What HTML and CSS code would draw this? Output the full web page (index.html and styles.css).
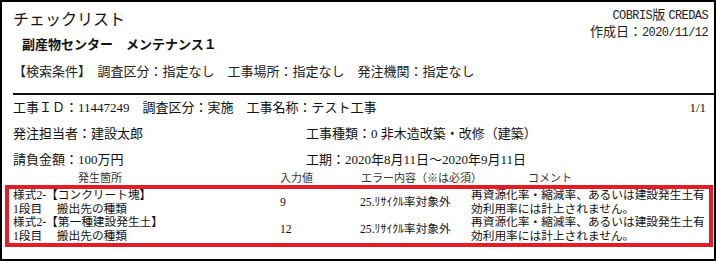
FILE: index.html
```html
<!DOCTYPE html>
<html lang="ja">
<head>
<meta charset="utf-8">
<title>チェックリスト</title>
<link rel="stylesheet" href="styles.css">
</head>
<body>
<div class="page">
  <header class="head">
    <div class="head-main">
      <h1 class="title">チェックリスト</h1>
      <p class="subtitle">副産物センター　メンテナンス１</p>
      <p class="cond">【検索条件】　調査区分：指定なし　工事場所：指定なし　発注機関：指定なし</p>
    </div>
    <div class="meta">
      <p><span class="lat">COBRIS</span>版 <span class="lat">CREDAS</span></p>
      <p>作成日：<span class="lat">2020/11/12</span></p>
    </div>
  </header>
  <section class="info">
    <div class="info-row info-first"><span>工事ＩＤ：11447249　調査区分：実施　工事名称：テスト工事</span><span>1/1</span></div>
    <div class="info-row info-two"><span>発注担当者：建設太郎</span><span>工事種類：0 非木造改築・改修（建築）</span></div>
    <div class="info-row info-two info-last"><span>請負金額：100万円</span><span>工期：2020年8月11日～2020年9月11日</span></div>
  </section>
  <section class="errors">
    <div class="err-grid err-head">
      <div class="h-place">発生箇所</div>
      <div class="h-value">入力値</div>
      <div class="h-error">エラー内容（※は必須）</div>
      <div class="h-comment">コメント</div>
    </div>
    <div class="err-box">
      <div class="err-grid err-row">
        <div class="c-place">様式2-【コンクリート塊】<br>1段目　 搬出先の種類</div>
        <div class="c-value">9</div>
        <div class="c-error">25.ﾘｻｲｸﾙ率対象外</div>
        <div class="c-comment">再資源化率・縮減率、あるいは建設発生土有<br>効利用率には計上されません。</div>
      </div>
      <div class="err-grid err-row">
        <div class="c-place">様式2-【第一種建設発生土】<br>1段目　 搬出先の種類</div>
        <div class="c-value">12</div>
        <div class="c-error">25.ﾘｻｲｸﾙ率対象外</div>
        <div class="c-comment">再資源化率・縮減率、あるいは建設発生土有<br>効利用率には計上されません。</div>
      </div>
    </div>
  </section>
</div>
</body>
</html>
```
FILE: styles.css
```css
* { box-sizing: border-box; }
html, body { margin: 0; padding: 0; background: #fff; }
body {
  font-family: "Liberation Serif", "Noto Sans CJK JP", serif;
  color: #111;
}
p, h1 { margin: 0; }

.page {
  width: 716px;
  height: 261px;
  border: 2px solid #000;
  background: #fff;
  overflow: hidden;
}

.head {
  display: grid;
  grid-template-columns: 1fr auto;
  padding: 5px 6px 0 11px;
}
.title {
  font-size: 16px;
  font-weight: normal;
  line-height: 26px;
}
.subtitle {
  font-size: 13px;
  font-weight: bold;
  line-height: 20px;
  margin-top: 2px;
  padding-left: 9px;
}
.cond {
  font-size: 13px;
  line-height: 20px;
  margin-top: 7px;
  white-space: nowrap;
  color: #222;
}
.meta {
  font-size: 13px;
  line-height: 16px;
  text-align: right;
  color: #222;
}
.lat {
  font-family: "Liberation Mono", monospace;
  font-size: 12px;
  letter-spacing: -0.6px;
}

.info {
  margin: 11px 0 0 11px;
  border-top: 2px solid #111;
  font-size: 13px;
}
.info-row {
  line-height: 26px;
  white-space: nowrap;
}
.info-last { line-height: 25px; }
.info-first {
  display: flex;
  justify-content: space-between;
  padding-right: 8px;
}
.info-two {
  display: grid;
  grid-template-columns: 293px 1fr;
}

.errors {
  margin: 0 1px 0 3px;
}
.err-grid {
  display: grid;
  grid-template-columns: 267px 80px 111px 1fr;
}
.err-head {
  padding-left: 8px;
  font-size: 11px;
  line-height: 13px;
  color: #333;
  white-space: nowrap;
}
.h-place { padding-left: 65px; }
.h-value { padding-left: 0; }
.h-error { padding-left: 1px; }
.h-comment { padding-left: 57px; }

.err-box {
  border: 4px solid #e51c24;
  padding-left: 4px;
  font-size: 11.7px;
  line-height: 13.5px;
  color: #111;
  height: 62px;
}
.err-row {
  align-items: center;
  white-space: nowrap;
}
.c-value, .c-error { align-self: center; }
```
